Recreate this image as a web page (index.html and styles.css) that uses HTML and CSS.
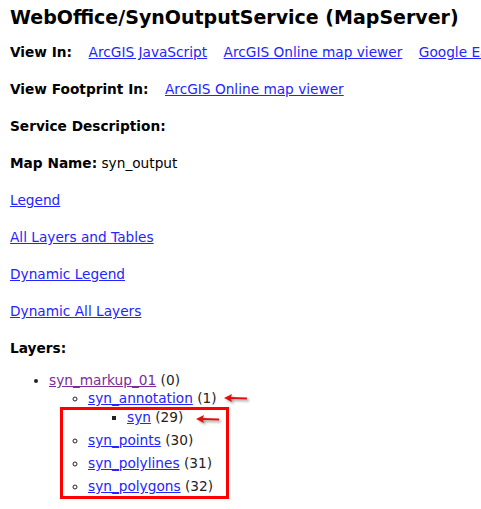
FILE: index.html
```html
<!DOCTYPE html>
<html>
<head>
<meta charset="utf-8">
<link rel="stylesheet" href="styles.css">
</head>
<body>
<div class="page">
  <h2 class="title">WebOffice/SynOutputService (MapServer)</h2>
  <p class="row"><b>View In:</b><span class="gap"></span><a href="#">ArcGIS JavaScript</a><span class="gap"></span><a href="#">ArcGIS Online map viewer</a><span class="gap"></span><a href="#">Google Earth</a></p>
  <p class="row"><b>View Footprint In:</b><span class="gap"></span><a href="#">ArcGIS Online map viewer</a></p>
  <p class="row"><b>Service Description:</b></p>
  <p class="row"><b>Map Name:</b> syn_output</p>
  <p class="row"><a href="#">Legend</a></p>
  <p class="row"><a href="#">All Layers and Tables</a></p>
  <p class="row"><a href="#">Dynamic Legend</a></p>
  <p class="row"><a href="#">Dynamic All Layers</a></p>
  <p class="row"><b>Layers:</b></p>
  <div class="layers">
    <ul class="l1">
      <li><a class="visited" href="#">syn_markup_01</a> (0)
        <ul class="l2">
          <li><a href="#">syn_annotation</a> (1)
            <ul class="l3">
              <li><a href="#">syn</a> (29)</li>
            </ul>
          </li>
          <li><a href="#">syn_points</a> (30)</li>
          <li><a href="#">syn_polylines</a> (31)</li>
          <li><a href="#">syn_polygons</a> (32)</li>
        </ul>
      </li>
    </ul>
    <div class="box"></div>
    <svg class="arrow a1" width="30" height="14" viewBox="0 0 30 14"><path d="M3 7 L11 3 L10 6 L26 6.5 L26 8.5 L10 8 L11 11 Z" fill="#e01010"/></svg>
    <svg class="arrow a2" width="30" height="14" viewBox="0 0 30 14"><path d="M3 7 L11 3 L10 6 L26 6.5 L26 8.5 L10 8 L11 11 Z" fill="#e01010"/></svg>
  </div>
</div>
</body>
</html>
```
FILE: styles.css
```css
html, body {
  margin: 0;
  padding: 0;
  background: #ffffff;
  overflow: hidden;
}
.page {
  padding: 0 0 20px 10px;
  font-family: "DejaVu Sans", Verdana, sans-serif;
  font-size: 13.7px;
  color: #000;
  white-space: nowrap;
}
.title {
  font-size: 19px;
  font-weight: bold;
  margin: 0;
  padding-top: 5px;
  height: 24px;
  line-height: 24px;
}
.row {
  margin: 0;
  height: 37px;
  line-height: 16px;
}
.title + .row {
  margin-top: 15px;
}
.gap {
  display: inline-block;
  width: 16.5px;
}
a {
  color: #2424ff;
  text-decoration: underline;
}
a.visited {
  color: #7a2d9a;
}
.layers {
  position: relative;
  color: #222;
}
.l1, .l2, .l3 {
  margin: 0;
  padding: 0;
}
.l1 {
  padding-left: 39px;
  list-style: disc;
  margin-top: -6px;
}
.l2 {
  padding-left: 39px;
  list-style: circle;
}
.l3 {
  padding-left: 39px;
  list-style: square;
}
.l1 li {
  line-height: 18px;
}
.l3 > li {
  margin-top: 1px;
}
.l2 > li + li {
  margin-top: 5px;
}
.box {
  position: absolute;
  left: 50px;
  top: 36px;
  width: 163px;
  height: 86px;
  border: 3px solid #ff0000;
}
.arrow {
  position: absolute;
  filter: drop-shadow(2px 2px 1px rgba(0,0,0,0.35));
}
.a1 {
  left: 211px;
  top: 20px;
}
.a2 {
  left: 183px;
  top: 41px;
}
```
